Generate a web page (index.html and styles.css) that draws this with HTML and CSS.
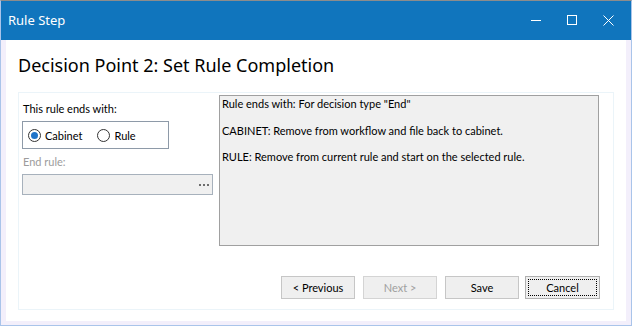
FILE: index.html
```html
<!DOCTYPE html>
<html>
<head>
<meta charset="utf-8">
<link rel="stylesheet" href="styles.css">
</head>
<body>
<div class="window">
  <div class="titlebar">
    <div class="title">Rule Step</div>
    <div class="caption-buttons">
      <div class="cap-btn"><svg width="11" height="11" viewBox="0 0 11 11"><line x1="0" y1="5.5" x2="10" y2="5.5" stroke="#fff" stroke-width="1"/></svg></div>
      <div class="cap-btn"><svg width="11" height="11" viewBox="0 0 11 11"><rect x="0.5" y="0.5" width="9" height="9" fill="none" stroke="#fff" stroke-width="1"/></svg></div>
      <div class="cap-btn"><svg width="11" height="11" viewBox="0 0 11 11"><path d="M0.5 0.5 L10.5 10.5 M10.5 0.5 L0.5 10.5" stroke="#fff" stroke-width="1"/></svg></div>
    </div>
  </div>
  <div class="client">
    <h1 class="heading">Decision Point 2: Set Rule Completion</h1>
    <div class="panel">
      <div class="top-row">
        <div class="left-col">
          <div class="label">This rule ends with:</div>
          <div class="group">
            <label class="radio">
              <svg width="13" height="13" viewBox="0 0 13 13"><circle cx="6.5" cy="6.5" r="6" fill="#fff" stroke="#333" stroke-width="1"/><circle cx="6.5" cy="6.5" r="3.5" fill="#1f74c9"/></svg>
              <span>Cabinet</span>
            </label>
            <label class="radio">
              <svg width="13" height="13" viewBox="0 0 13 13"><circle cx="6.5" cy="6.5" r="6" fill="#fff" stroke="#333" stroke-width="1"/></svg>
              <span>Rule</span>
            </label>
          </div>
          <div class="label disabled">End rule:</div>
          <div class="picker">
            <span class="dots"><i></i><i></i><i></i></span>
          </div>
        </div>
        <div class="desc">
          <p>Rule ends with: For decision type "End"</p>
          <p>CABINET: Remove from workflow and file back to cabinet.</p>
          <p>RULE: Remove from current rule and start on the selected rule.</p>
        </div>
      </div>
      <div class="buttons">
        <div class="btn">&lt; Previous</div>
        <div class="btn disabled">Next &gt;</div>
        <div class="btn">Save</div>
        <div class="btn focus"><span class="focus-rect">Cancel</span></div>
      </div>
    </div>
  </div>
</div>
</body>
</html>
```
FILE: styles.css
```css
* { box-sizing: border-box; }
html, body { margin: 0; padding: 0; }
body {
  font-family: Lato, "Noto Sans", sans-serif;
  font-size: 11px;
  color: #000;
  background: #fff;
}
.window {
  width: 632px;
  height: 326px;
  border: 1px solid #a9c4ea;
  border-top-color: #8c8c8c;
  background: #f3effb;
  display: flex;
  flex-direction: column;
}
.titlebar {
  height: 39px;
  background: #1075bd;
  display: flex;
  align-items: center;
  justify-content: space-between;
  color: #fff;
}
.title {
  padding-left: 7px;
  font-family: "Noto Sans", sans-serif;
  font-size: 13px;
  padding-bottom: 2px;
}
.caption-buttons {
  display: flex;
  padding-right: 5px;
  height: 100%;
}
.cap-btn {
  width: 36px;
  display: flex;
  align-items: center;
  justify-content: center;
  padding-bottom: 1px;
}
.cap-btn svg { display: block; }
.client {
  flex: 1;
  margin: 0 5px 4px 5px;
  background: #fff;
  display: flex;
  flex-direction: column;
  padding: 0 12px 11px 12px;
}
.heading {
  margin: 0;
  font-family: "Noto Sans", sans-serif;
  font-weight: normal;
  font-size: 18px;
  line-height: 24px;
  padding: 13px 0 0 0;
  height: 52px;
}
.panel {
  flex: 1;
  border: 1px solid #ebf4f9;
  display: flex;
  flex-direction: column;
  padding: 2px 13px 0 3px;
}
.top-row {
  display: flex;
  gap: 6px;
}
.left-col {
  width: 191px;
  padding-top: 6px;
}
.label {
  line-height: 15px;
  height: 20px;
  padding-left: 1px;
}
.label.disabled { color: #9c9c9c; height: 25px; padding-top: 5px; line-height: 15px; }
.group {
  width: 147px;
  height: 28px;
  border: 1px solid #8e9aa8;
  display: flex;
  align-items: center;
  padding-left: 5px;
  gap: 15px;
}
.radio {
  display: flex;
  align-items: center;
  gap: 4px;
}
.radio svg { display: block; }
.picker {
  height: 21px;
  border: 1px solid #a7b1bc;
  background: #f0f0f0;
  display: flex;
  align-items: center;
  justify-content: flex-end;
  padding-right: 3px;
}
.dots { display: flex; gap: 2px; }
.dots i { display: block; width: 2px; height: 2px; background: #6d6d6d; }
.desc {
  width: 380px;
  height: 151px;
  background: #f0f0f0;
  border: 1px solid #a0a0a0;
  padding: 1px 2px;
  line-height: 14px;
}
.desc p { margin: 0 0 12.5px 0; }
.buttons {
  display: flex;
  justify-content: flex-end;
  gap: 8px;
  margin-top: 30px;
}
.btn {
  width: 74px;
  height: 23px;
  background: #efefef;
  border: 1px solid #c6c6c6;
  display: flex;
  align-items: center;
  justify-content: center;
}
.btn.disabled { color: #a0a0a0; border-color: #d4d4d4; }
.btn.focus { width: 75px; margin-left: -2px; padding: 2px; border-color: #b0b0b0; }
.focus-rect {
  width: 100%;
  height: 100%;
  border: 1px dotted #000;
  display: flex;
  align-items: center;
  justify-content: center;
}
```
